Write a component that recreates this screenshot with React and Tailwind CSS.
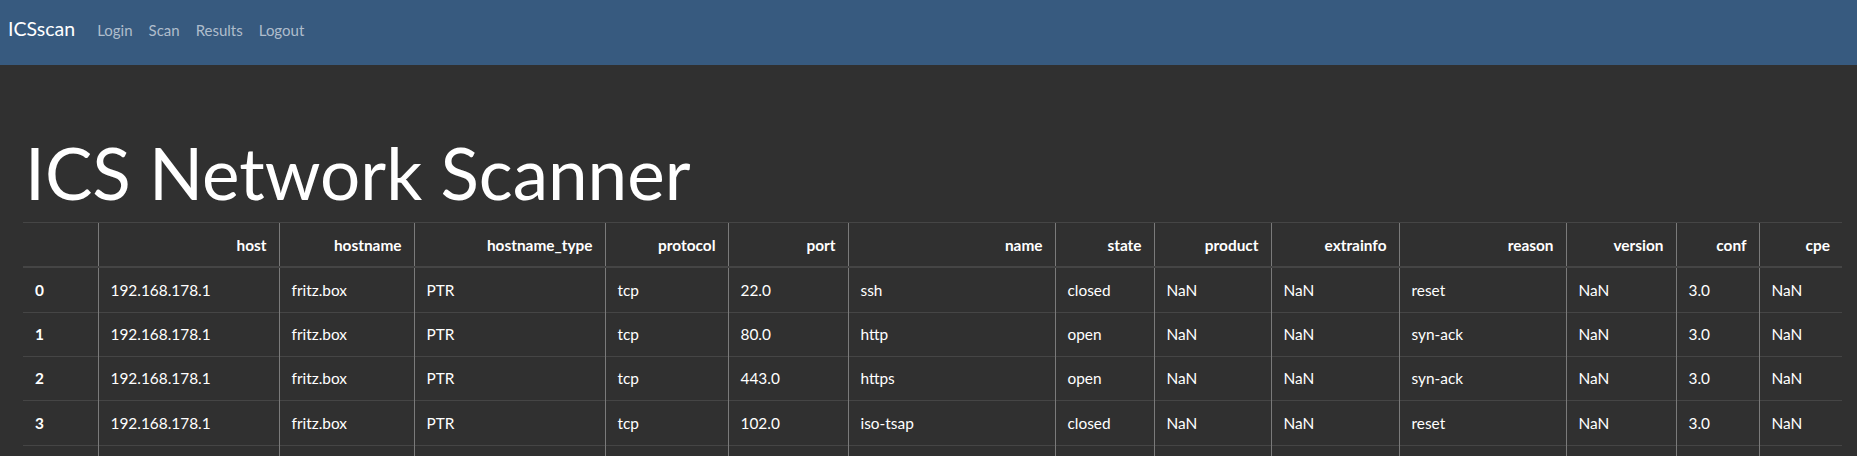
import React from 'react';

const columns = [
  { label: '', width: 'w-[75px]' },
  { label: 'host', width: 'w-[181px]' },
  { label: 'hostname', width: 'w-[135px]' },
  { label: 'hostname_type', width: 'w-[191px]' },
  { label: 'protocol', width: 'w-[123px]' },
  { label: 'port', width: 'w-[120px]' },
  { label: 'name', width: 'w-[207px]' },
  { label: 'state', width: 'w-[99px]' },
  { label: 'product', width: 'w-[117px]' },
  { label: 'extrainfo', width: 'w-[128px]' },
  { label: 'reason', width: 'w-[167px]' },
  { label: 'version', width: 'w-[110px]' },
  { label: 'conf', width: 'w-[83px]' },
  { label: 'cpe', width: 'w-[83px]' },
];

const results = [
  ['22.0', 'ssh', 'closed', 'reset'],
  ['80.0', 'http', 'open', 'syn-ack'],
  ['443.0', 'https', 'open', 'syn-ack'],
  ['102.0', 'iso-tsap', 'closed', 'reset'],
].map(([port, name, state, reason]) => [
  '192.168.178.1',
  'fritz.box',
  'PTR',
  'tcp',
  port,
  name,
  state,
  'NaN',
  'NaN',
  reason,
  'NaN',
  '3.0',
  'NaN',
]);

const navLinks = ['Login', 'Scan', 'Results', 'Logout'];

export default function App() {
  return (
    <div className="min-h-screen bg-[#303030] text-white font-['Lato','Noto_Sans',sans-serif] text-[15.4px]">
      <nav className="flex h-[65px] items-baseline bg-[#375a7f] pl-[8px] pt-[17px]">
        <a className="text-[19.5px] leading-[1.2] text-white">ICSscan</a>
        <ul className="ml-[14px] flex items-baseline">
          {navLinks.map((link) => (
            <li key={link}>
              <a className="px-[8px] text-[15px] leading-[1.2] text-[#afbdcc]">{link}</a>
            </li>
          ))}
        </ul>
      </nav>

      <main className="pl-[23px] pt-[65px]">
        <h1 className="ml-[2px] mb-[7px] text-[71px] font-normal leading-[1.2]">ICS Network Scanner</h1>

        <table className="w-[1819px] table-fixed border-collapse">
          <colgroup>
            {columns.map((col, i) => (
              <col key={i} className={col.width} />
            ))}
          </colgroup>
          <thead>
            <tr className="text-right">
              {columns.map((col, i) => (
                <th
                  key={i}
                  className={`border-t border-b-2 border-t-[#454545] border-b-[#454545] px-3 py-[10.4px] font-bold leading-[22.5px] ${
                    i > 0 ? 'border-l border-l-[#7a7a7a]' : ''
                  }`}
                >
                  {col.label}
                </th>
              ))}
            </tr>
          </thead>
          <tbody>
            {results.map((row, r) => (
              <tr key={r}>
                <th className="border-t border-[#454545] px-3 py-[10.4px] text-left font-bold leading-[22.5px]">
                  {r}
                </th>
                {row.map((cell, c) => (
                  <td
                    key={c}
                    className="border-t border-l border-t-[#454545] border-l-[#7a7a7a] px-3 py-[10.4px] leading-[22.5px]"
                  >
                    {cell}
                  </td>
                ))}
              </tr>
            ))}
            <tr className="h-[44px]">
              <th className="border-t border-[#454545]"></th>
              {columns.slice(1).map((col, c) => (
                <td key={c} className="border-t border-l border-t-[#454545] border-l-[#7a7a7a]"></td>
              ))}
            </tr>
          </tbody>
        </table>
      </main>
    </div>
  );
}
